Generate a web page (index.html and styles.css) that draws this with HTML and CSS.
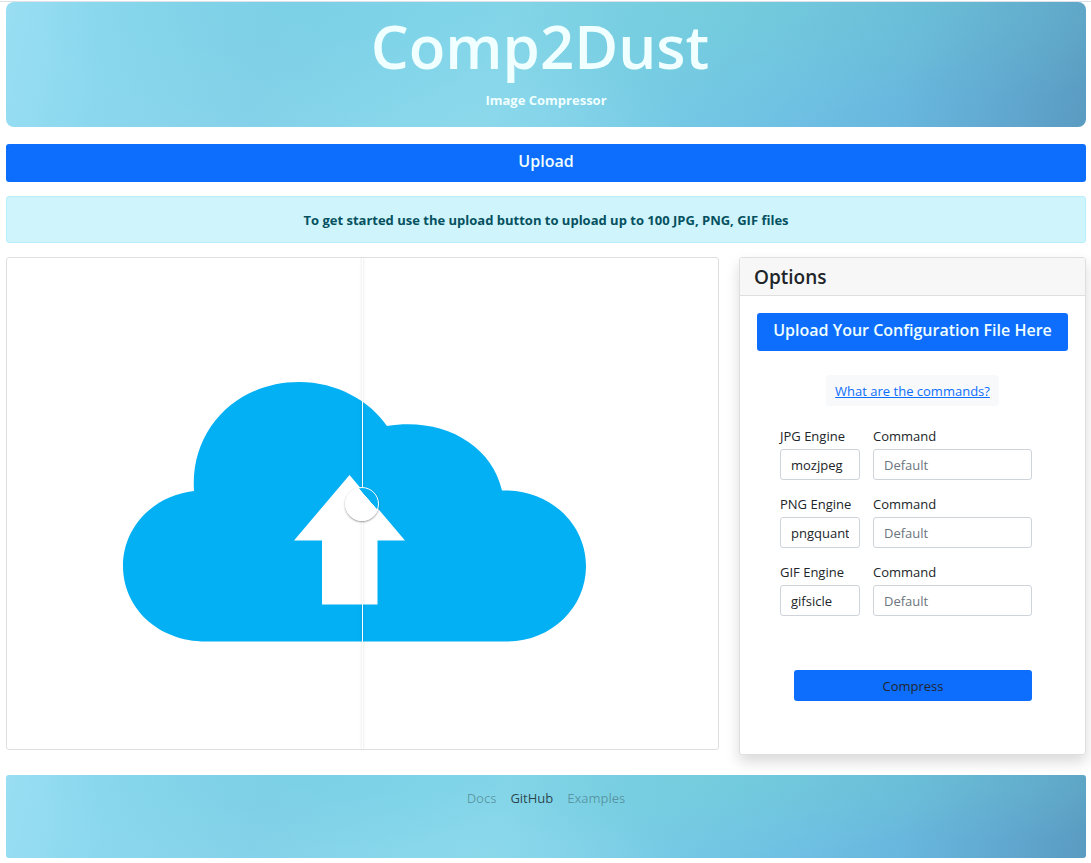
FILE: index.html
```html
<!DOCTYPE html>
<html lang="en">
<head>
<meta charset="utf-8">
<meta name="viewport" content="width=device-width, initial-scale=1">
<title>Comp2Dust</title>
<link rel="stylesheet" href="styles.css">
</head>
<body>
<div class="page">
  <header class="hero">
    <h1 class="hero-title">Comp2Dust</h1>
    <p class="hero-subtitle">Image Compressor</p>
  </header>

  <button class="btn btn-upload" type="button">Upload</button>

  <p class="alert">To get started use the upload button to upload up to 100 JPG, PNG, GIF files</p>

  <main class="workspace">
    <section class="preview" aria-label="Image comparison">
      <svg class="preview-image" viewBox="0 0 711 491" role="img" aria-label="Cloud upload">
        <path fill="#03b0f3" d="M199 383.500C151 383.500 116 350 116 308C116 270 145 238 187 233C183 170 231 124 292 124C330 124 363 143 380 168C434 159 484 185 495 232.500C544 231 579 267 579 308C579 350 544 383.500 500 383.500Z"/>
        <path fill="#fff" d="M342.500 217L398 282.500H370.500V346.500H315V282.500H287Z"/>
      </svg>
      <div class="divider">
        <button class="divider-handle" type="button" aria-label="Move comparison divider"></button>
      </div>
    </section>

    <section class="options">
      <h2 class="options-header">Options</h2>
      <div class="options-body">
        <button class="btn btn-config" type="button">Upload Your Configuration File Here</button>
        <a class="help-link" href="#commands">What are the commands?</a>
        <form class="engines">
          <div class="field">
            <label for="jpg-engine">JPG Engine</label>
            <select class="control" id="jpg-engine"><option>mozjpeg</option></select>
          </div>
          <div class="field">
            <label for="jpg-command">Command</label>
            <input class="control" id="jpg-command" type="text" placeholder="Default">
          </div>
          <div class="field">
            <label for="png-engine">PNG Engine</label>
            <select class="control" id="png-engine"><option>pngquant</option></select>
          </div>
          <div class="field">
            <label for="png-command">Command</label>
            <input class="control" id="png-command" type="text" placeholder="Default">
          </div>
          <div class="field">
            <label for="gif-engine">GIF Engine</label>
            <select class="control" id="gif-engine"><option>gifsicle</option></select>
          </div>
          <div class="field">
            <label for="gif-command">Command</label>
            <input class="control" id="gif-command" type="text" placeholder="Default">
          </div>
          <button class="btn-compress" type="submit">Compress</button>
        </form>
      </div>
    </section>
  </main>

  <footer class="footer">
    <nav class="footer-nav">
      <a href="#docs">Docs</a>
      <a class="active" href="#github">GitHub</a>
      <a href="#examples">Examples</a>
    </nav>
  </footer>
</div>
</body>
</html>
```
FILE: styles.css
```css
* {
  box-sizing: border-box;
}

body {
  margin: 0;
  background: #fff;
  color: #212529;
  font-family: "Open Sans", "Noto Sans", sans-serif;
  font-size: 13px;
  line-height: 20px;
}

h1, h2, p {
  margin: 0;
}

button, input, select {
  font: inherit;
}

.page {
  margin-top: 1px;
  padding: 0 5px 5px 6px;
  border-top: 1px solid #dee2e6;
}

.hero, .footer {
  background:
    radial-gradient(ellipse 24% 100% at 26% 0%, rgba(116, 207, 226, .5), transparent),
    radial-gradient(ellipse 26% 100% at 66% 0%, rgba(116, 208, 216, .6), transparent),
    radial-gradient(ellipse 24% 80% at 88% 0%, rgba(104, 188, 204, .5), transparent),
    radial-gradient(ellipse 20% 90% at 42% 100%, rgba(146, 218, 236, .5), transparent),
    linear-gradient(103deg, #99def3 0%, #8bd8ee 10%, #84d1e9 24%, #82d5ea 38%, #86d6ea 46%, #77cbe5 60%, #6ebfe3 74%, #68b7de 83%, #61a8d0 92%, #5a9bc1 100%);
}

.hero {
  padding: 7px 0 16px;
  border-radius: 8px;
  color: azure;
  text-align: center;
}

.hero-title {
  padding-right: 12px;
  font-size: 60px;
  font-weight: 600;
  line-height: 74px;
}

.hero-subtitle {
  padding: 7px 0 1px;
  font-weight: 700;
}

.btn {
  display: block;
  width: 100%;
  height: 38px;
  padding: 0 0 4px;
  border: 0;
  border-radius: 3px;
  background: #0d6efd;
  color: azure;
  font-size: 16px;
  font-weight: 600;
  line-height: 20px;
}

.btn-upload {
  margin-top: 17px;
}

.alert {
  margin-top: 14px;
  padding: 14px 13px 12px;
  border: 1px solid #b6effb;
  border-radius: 3px;
  background: #cff4fc;
  color: #055160;
  font-weight: 700;
  line-height: 19px;
  text-align: center;
}

.workspace {
  display: grid;
  grid-template-columns: 713fr 347fr;
  gap: 20px;
  align-items: start;
  margin-top: 14px;
}

.preview {
  position: relative;
  border: 1px solid #dfdfdf;
  border-radius: 3px;
}

.preview-image {
  display: block;
  width: 100%;
}

.divider {
  position: absolute;
  top: 0;
  right: 50%;
  bottom: 0;
  display: flex;
  align-items: center;
  justify-content: center;
  width: 1px;
  background: #fff;
  box-shadow: 0 0 3px rgba(0, 0, 0, .2);
}

.divider-handle {
  flex: none;
  width: 34px;
  height: 34px;
  padding: 0;
  border: 1px solid #fff;
  border-radius: 50%;
  background: linear-gradient(49deg, #fff 66%, #03b0f3 67%) border-box;
  background-clip: padding-box;
  box-shadow: 0 1px 2px rgba(0, 0, 0, .4);
}

.options {
  border: 1px solid #dfdfdf;
  border-radius: 3px;
  background: #fff;
  box-shadow: 0 7px 14px rgba(0, 0, 0, .15);
}

.options-header {
  padding: 7px 14px 6px;
  border-bottom: 1px solid #dfdfdf;
  background: #f7f7f7;
  font-size: 19px;
  font-weight: 600;
  line-height: 24px;
}

.options-body {
  display: flex;
  flex-direction: column;
  align-items: center;
  padding: 17px 17px 53px;
}

.help-link {
  margin-top: 24px;
  padding: 6px 9px 5px;
  border-radius: 3px;
  background: #f8f9fa;
  color: #0d6efd;
}

.engines {
  display: grid;
  grid-template-columns: 80px 159px;
  gap: 14px 13px;
  margin-top: 20px;
  padding-right: 13px;
}

.field {
  display: flex;
  flex-direction: column;
  gap: 3px;
}

.field label {
  font-weight: 500;
}

.control {
  width: 100%;
  height: 31px;
  padding: 0 10px;
  border: 1px solid #ced4da;
  border-radius: 3px;
  background: #fff;
  color: #212529;
  appearance: none;
}

.control::placeholder {
  color: #6c757d;
  opacity: 1;
}

.btn-compress {
  grid-column: 1 / -1;
  height: 31px;
  margin: 40px 0 0 14px;
  border: 0;
  border-radius: 3px;
  background: #0d6efd;
  color: #212529;
}

.footer {
  min-height: 83px;
  margin-top: 20px;
  padding-top: 13px;
  border-radius: 3px;
}

.footer-nav {
  display: flex;
  justify-content: center;
  gap: 14px;
}

.footer-nav a {
  color: rgba(0, 0, 0, .3);
  text-decoration: none;
}

.footer-nav .active {
  color: rgba(0, 0, 0, .7);
}
```
